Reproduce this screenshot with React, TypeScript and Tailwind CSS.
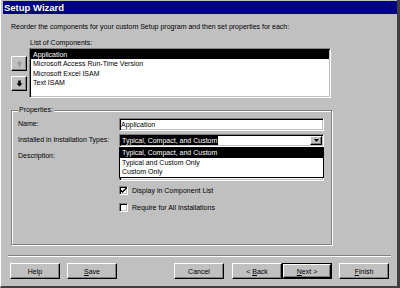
import React from "react";

const sunken =
  "border border-t-[#808080] border-l-[#808080] border-r-white border-b-white shadow-[inset_1px_1px_0_#000,inset_-1px_-1px_0_#c0c0c0] bg-white";
const raised =
  "border border-t-white border-l-white border-r-black border-b-black shadow-[inset_-1px_-1px_0_#808080] bg-[#c0c0c0]";

function Btn({ children, def, className = "" }: { children: React.ReactNode; def?: boolean; className?: string }) {
  if (def) {
    return (
      <div className={`w-[50px] h-[16px] border border-black ${className}`}>
        <div className={`w-full h-full ${raised} flex items-center justify-center leading-none`}>{children}</div>
      </div>
    );
  }
  return (
    <div className={`w-[50px] h-[16px] ${raised} flex items-center justify-center leading-none ${className}`}>
      {children}
    </div>
  );
}

function Check({ checked, label, className = "" }: { checked?: boolean; label: string; className?: string }) {
  return (
    <div className={`flex items-center h-[9px] ${className}`}>
      <div className={`w-[9px] h-[9px] ${sunken} flex items-center justify-center`}>
        {checked && (
          <svg width="7" height="7" viewBox="0 0 7 7">
            <path d="M0.5 3 L2.5 5 L6.5 1" stroke="#000" strokeWidth="1.4" fill="none" />
          </svg>
        )}
      </div>
      <span className="ml-[4px] leading-[9px]">{label}</span>
    </div>
  );
}

export default function App() {
  return (
    <div className="w-[400px] h-[288px] bg-[#c0c0c0] overflow-hidden flex flex-col border-l border-l-white border-r-[3px] border-r-[#404040] border-b-[2px] border-b-[#404040] text-[7px] text-black font-['Liberation_Sans',Arial,sans-serif]">
      {/* title bar */}
      <div className="ml-[2px] mt-[1px] h-[13px] bg-[#000080] text-white font-bold text-[9.5px] leading-[13px] pl-[1px] shrink-0">
        Setup Wizard
      </div>

      <div className="mt-[8px] ml-[10px] leading-[10px] h-[10px]">
        Reorder the components for your custom Setup program and then set properties for each:
      </div>
      <div className="mt-[6px] ml-[29px] leading-[10px] h-[10px]">List of Components:</div>

      <div className="flex ml-[10px]">
        <div className="flex flex-col pt-[8px] gap-[5px]">
          <div className={`w-[16px] h-[15px] ${raised} flex items-center justify-center`}>
            <svg width="7" height="7" viewBox="0 0 7 7">
              <path d="M3.5 0.5 L6.5 3.5 L4.8 3.5 L4.8 6.5 L2.2 6.5 L2.2 3.5 L0.5 3.5 Z" fill="#9a9a9a" />
            </svg>
          </div>
          <div className={`w-[16px] h-[15px] ${raised} flex items-center justify-center`}>
            <svg width="7" height="7" viewBox="0 0 7 7">
              <path d="M3.5 6.5 L6.5 3.5 L4.8 3.5 L4.8 0.5 L2.2 0.5 L2.2 3.5 L0.5 3.5 Z" fill="#000" />
            </svg>
          </div>
        </div>
        <div className={`ml-[2px] w-[302px] h-[50px] ${sunken} pt-[1px] px-[1px]`}>
          <div className="bg-black text-white leading-[9px] h-[9px] pl-[2px]">Application</div>
          <div className="leading-[9.5px] pl-[2px]">Microsoft Access Run-Time Version</div>
          <div className="leading-[9.5px] pl-[2px]">Microsoft Excel ISAM</div>
          <div className="leading-[9.5px] pl-[2px]">Text ISAM</div>
        </div>
      </div>

      {/* properties */}
      <fieldset className="mt-[7px] ml-[10px] w-[321px] h-[140px] border border-[#808080] shadow-[inset_1px_1px_0_#fff,1px_1px_0_#fff] pl-[6px] pt-[3px] m-0 p-0 min-w-0">
        <legend className="px-[1px] leading-[10px] bg-[#c0c0c0] ml-0">Properties:</legend>
        <div className="flex items-center h-[13px]">
          <div className="w-[101px]">Name:</div>
          <div className={`w-[205px] h-[13px] ${sunken} pl-[1px] leading-[9px] pt-[1px]`}>Application</div>
        </div>
        <div className="flex items-center h-[13px] mt-[3px]">
          <div className="w-[101px]">Installed in Installation Types:</div>
          <div className={`relative w-[205px] h-[13px] ${sunken} flex items-center`}>
            <span className="ml-[1px] bg-black text-white leading-[9px] px-[1px]">Typical, Compact, and Custom</span>
            <div className={`ml-auto mr-[1px] w-[12px] h-[9px] ${raised} flex items-center justify-center`}>
              <svg width="5" height="3" viewBox="0 0 5 3">
                <path d="M0 0 H5 L2.5 3 Z" fill="#000" />
              </svg>
            </div>
            <div className="absolute left-[-1px] top-[12px] w-[205px] h-[31px] bg-white border border-black z-10">
              <div className="bg-black text-white leading-[9.5px] h-[9.5px] pl-[2px]">Typical, Compact, and Custom</div>
              <div className="leading-[9.5px] pl-[2px]">Typical and Custom Only</div>
              <div className="leading-[9.5px] pl-[2px]">Custom Only</div>
            </div>
          </div>
        </div>
        <div className="flex mt-[3px]">
          <div className="w-[101px] pt-[1px] leading-[10px]">Description:</div>
          <div className={`w-[205px] h-[31px] ${sunken}`} />
        </div>
        <Check checked label="Display in Component List" className="mt-[5px] ml-[101px]" />
        <Check label="Require for All Installations" className="mt-[8px] ml-[101px]" />
      </fieldset>

      <div className="mt-[10px] ml-[7px] w-[383px] h-[2px] border-t border-t-[#808080] border-b border-b-white" />

      <div className="flex mt-[6px] ml-[9px]">
        <Btn>Help</Btn>
        <Btn className="ml-[7px]">
          <span><u>S</u>ave</span>
        </Btn>
        <Btn className="ml-[57px]">Cancel</Btn>
        <Btn className="ml-[8px]">
          <span>&lt; <u>B</u>ack</span>
        </Btn>
        <Btn def>
          <span><u>N</u>ext &gt;</span>
        </Btn>
        <Btn className="ml-[7px]">
          <span><u>F</u>inish</span>
        </Btn>
      </div>
    </div>
  );
}
